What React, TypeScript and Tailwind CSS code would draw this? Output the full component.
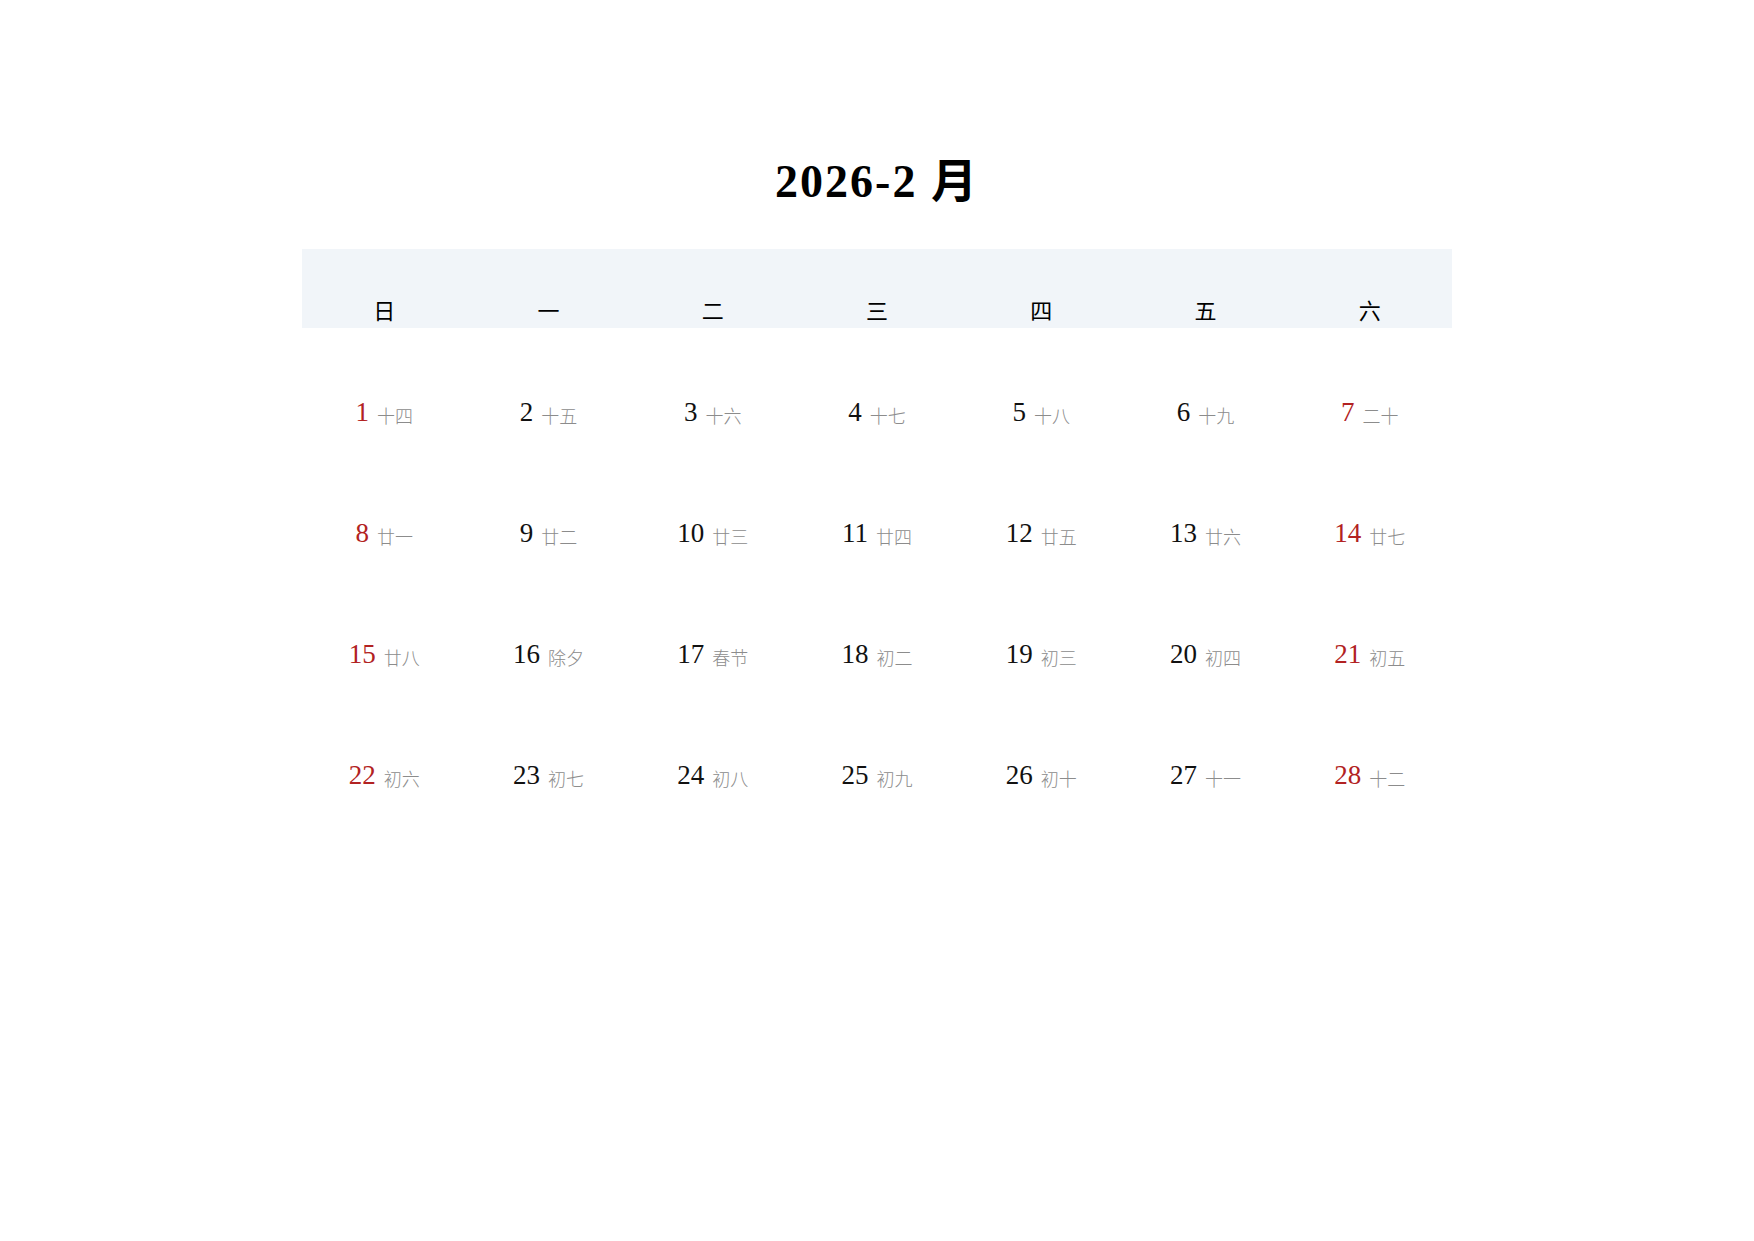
import React from "react";

type Day = { d: number; lunar: string };

const weekdays = ["日", "一", "二", "三", "四", "五", "六"];

const days: Day[] = [
  { d: 1, lunar: "十四" }, { d: 2, lunar: "十五" }, { d: 3, lunar: "十六" }, { d: 4, lunar: "十七" },
  { d: 5, lunar: "十八" }, { d: 6, lunar: "十九" }, { d: 7, lunar: "二十" },
  { d: 8, lunar: "廿一" }, { d: 9, lunar: "廿二" }, { d: 10, lunar: "廿三" }, { d: 11, lunar: "廿四" },
  { d: 12, lunar: "廿五" }, { d: 13, lunar: "廿六" }, { d: 14, lunar: "廿七" },
  { d: 15, lunar: "廿八" }, { d: 16, lunar: "除夕" }, { d: 17, lunar: "春节" }, { d: 18, lunar: "初二" },
  { d: 19, lunar: "初三" }, { d: 20, lunar: "初四" }, { d: 21, lunar: "初五" },
  { d: 22, lunar: "初六" }, { d: 23, lunar: "初七" }, { d: 24, lunar: "初八" }, { d: 25, lunar: "初九" },
  { d: 26, lunar: "初十" }, { d: 27, lunar: "十一" }, { d: 28, lunar: "十二" },
];

const font = "font-['Liberation_Serif','Noto_Sans_CJK_SC',serif]";

const App: React.FC = () => {
  return (
    <div className={`w-[1754px] h-[1241px] bg-white ${font}`}>
      <div className="w-[1150px] mx-auto pt-[160px]">
        <h1 className="text-center text-[46px] leading-[44px] h-[44px] font-semibold tracking-[2px] text-black">
          2026-2 月
        </h1>
        <div className="mt-[45px] grid grid-cols-7 h-[79px] bg-[#f1f5f9] items-end pb-[6px]">
          {weekdays.map((w) => (
            <div key={w} className="text-center text-[22px] leading-[26px] text-black font-['Noto_Sans_CJK_SC',serif]">
              {w}
            </div>
          ))}
        </div>
        <div className="mt-[24px] grid grid-cols-7">
          {days.map((day, i) => {
            const weekend = i % 7 === 0 || i % 7 === 6;
            return (
              <div key={day.d} className="h-[121px] flex items-center justify-center gap-[8px]">
                <span className={`text-[27px] leading-none ${weekend ? "text-[#b22222]" : "text-[#111]"}`}>
                  {day.d}
                </span>
                <span className="text-[18px] leading-none text-[#8c8c8c] font-['Noto_Sans_CJK_SC',serif] font-light mt-[4px]">
                  {day.lunar}
                </span>
              </div>
            );
          })}
        </div>
      </div>
    </div>
  );
};

export default App;
